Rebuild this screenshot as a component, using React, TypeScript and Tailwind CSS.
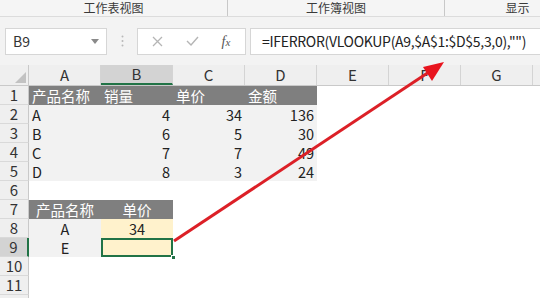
import React from "react";

const font = { fontFamily: '"Noto Sans CJK SC", "Noto Sans", sans-serif' };

const cols = ["A", "B", "C", "D", "E", "F", "G", ""];

type CellDef = { text?: string | number; cls?: string };

// one entry per row, 4 cells max (A-D), rest blank
const sheet: CellDef[][] = [
  [
    { text: "产品名称", cls: "bg-[#7f7f7f] text-white justify-start" },
    { text: "销量", cls: "bg-[#7f7f7f] text-white justify-start" },
    { text: "单价", cls: "bg-[#7f7f7f] text-white justify-start" },
    { text: "金额", cls: "bg-[#7f7f7f] text-white justify-start" },
  ],
  [
    { text: "A", cls: "bg-[#f2f2f2] justify-start" },
    { text: 4, cls: "bg-[#f2f2f2] justify-end" },
    { text: 34, cls: "bg-[#f2f2f2] justify-end" },
    { text: 136, cls: "bg-[#f2f2f2] justify-end" },
  ],
  [
    { text: "B", cls: "bg-[#f2f2f2] justify-start" },
    { text: 6, cls: "bg-[#f2f2f2] justify-end" },
    { text: 5, cls: "bg-[#f2f2f2] justify-end" },
    { text: 30, cls: "bg-[#f2f2f2] justify-end" },
  ],
  [
    { text: "C", cls: "bg-[#f2f2f2] justify-start" },
    { text: 7, cls: "bg-[#f2f2f2] justify-end" },
    { text: 7, cls: "bg-[#f2f2f2] justify-end" },
    { text: 49, cls: "bg-[#f2f2f2] justify-end" },
  ],
  [
    { text: "D", cls: "bg-[#f2f2f2] justify-start" },
    { text: 8, cls: "bg-[#f2f2f2] justify-end" },
    { text: 3, cls: "bg-[#f2f2f2] justify-end" },
    { text: 24, cls: "bg-[#f2f2f2] justify-end" },
  ],
  [],
  [
    { text: "产品名称", cls: "bg-[#7f7f7f] text-white justify-center" },
    { text: "单价", cls: "bg-[#7f7f7f] text-white justify-center" },
  ],
  [
    { text: "A", cls: "bg-[#f2f2f2] justify-center" },
    { text: 34, cls: "bg-[#fff2cc] justify-center" },
  ],
  [
    { text: "E", cls: "bg-[#f2f2f2] justify-center" },
    { text: "", cls: "bg-[#fff2cc] justify-center selected" },
  ],
  [],
  [],
];

function FormulaBar() {
  return (
    <div className="h-[48px] bg-[#f3f3f3] flex items-center pl-[5px] gap-0">
      <div className="w-[102px] h-[27px] bg-white border border-[#d6d6d6] flex items-center justify-between pl-[7px] pr-[7px] text-[14px] text-[#333]">
        <span>B9</span>
        <svg width="8" height="5" viewBox="0 0 8 5">
          <path d="M0 0h8L4 5z" fill="#8a8a8a" />
        </svg>
      </div>
      <div className="w-[30px] flex justify-center">
        <svg width="3" height="12" viewBox="0 0 3 12">
          <circle cx="1.5" cy="1.5" r="1" fill="#b8b8b8" />
          <circle cx="1.5" cy="6" r="1" fill="#b8b8b8" />
          <circle cx="1.5" cy="10.5" r="1" fill="#b8b8b8" />
        </svg>
      </div>
      <div className="w-[109px] h-[27px] bg-white border border-[#d6d6d6] flex items-center">
        <div className="w-[38px] flex justify-center">
          <svg width="11" height="11" viewBox="0 0 11 11">
            <path d="M1 1l9 9M10 1l-9 9" stroke="#b5b5b5" strokeWidth="1.3" />
          </svg>
        </div>
        <div className="w-[32px] flex justify-center">
          <svg width="13" height="10" viewBox="0 0 13 10">
            <path d="M1 5l4 4 7-8" stroke="#b5b5b5" strokeWidth="1.4" fill="none" />
          </svg>
        </div>
        <div className="w-[36px] flex justify-center">
          <span className="italic text-[14px] text-[#555]" style={{ fontFamily: '"Liberation Serif", serif' }}>
            f<span className="text-[11px]">x</span>
          </span>
        </div>
      </div>
      <div className="ml-[4px] flex-1 h-[27px] bg-white border border-[#d6d6d6] border-r-0 flex items-center pl-[11px] text-[14px] tracking-[-0.3px] text-[#222] whitespace-nowrap overflow-hidden">
        =IFERROR(VLOOKUP(A9,$A$1:$D$5,3,0),"")
      </div>
    </div>
  );
}

function TopStrip() {
  return (
    <div className="h-[17px] bg-[#f5f5f5] border-b border-[#dcdcdc] flex text-[12px] text-[#3a3a3a] leading-[16px] overflow-hidden">
      <div className="w-[228px] shrink-0 text-center border-r border-[#c8c8c8]">工作表视图</div>
      <div className="w-[217px] shrink-0 text-center border-r border-[#c8c8c8]">工作簿视图</div>
      <div className="w-[145px] shrink-0 text-center">显示</div>
    </div>
  );
}

export default function App() {
  return (
    <div className="relative w-[540px] h-[298px] overflow-hidden bg-white" style={font}>
      <TopStrip />
      <FormulaBar />

      {/* column headers */}
      <div className="flex h-[21px] bg-[#efefef] border-b border-[#c9c9c9]">
        <div className="w-[29px] shrink-0 relative border-r border-[#c9c9c9]">
          <svg className="absolute right-[2px] bottom-[2px]" width="11" height="11" viewBox="0 0 11 11">
            <path d="M11 0v11H0z" fill="#c2c2c2" />
          </svg>
        </div>
        {cols.map((c, i) => (
          <div
            key={i}
            className={`w-[72px] shrink-0 flex items-center justify-center text-[15px] text-[#333] border-r border-[#d4d4d4] ${
              c === "B" ? "bg-[#d3d3d3] border-b-2 border-b-[#217346]" : ""
            }`}
          >
            {c}
          </div>
        ))}
      </div>

      {/* rows */}
      {sheet.map((row, r) => (
        <div key={r} className="flex h-[19px]">
          <div
            className={`w-[29px] shrink-0 flex items-center justify-center text-[15px] text-[#333] border-b border-[#d9d9d9] ${
              r === 8 ? "bg-[#d3d3d3] border-r-2 border-r-[#217346]" : "bg-[#efefef] border-r border-r-[#c9c9c9]"
            }`}
          >
            {r + 1}
          </div>
          {cols.map((_, c) => {
            const cell = row[c];
            const selected = cell?.cls?.includes("selected");
            return (
              <div
                key={c}
                className={`relative w-[72px] shrink-0 flex items-center px-[3px] text-[14.5px] text-[#222] ${cell?.cls ?? ""}`}
              >
                {cell?.text}
                {selected && (
                  <>
                    <div className="absolute inset-0 border-2 border-[#217346]" />
                    <div className="absolute right-[-3px] bottom-[-3px] w-[5px] h-[5px] bg-[#217346] border border-white" />
                  </>
                )}
              </div>
            );
          })}
        </div>
      ))}
      {/* partial row at bottom edge */}
      <div className="flex h-[19px]">
        <div className="w-[29px] shrink-0 bg-[#efefef] border-r border-r-[#c9c9c9]" />
      </div>

      {/* red arrow annotation */}
      <svg className="absolute left-0 top-0 pointer-events-none" width="540" height="298" viewBox="0 0 540 298">
        <line x1="174" y1="241" x2="432" y2="70" stroke="#dc2027" strokeWidth="3" />
        <path d="M444 62L423 67L432 81Z" fill="#e8141e" />
      </svg>
    </div>
  );
}
